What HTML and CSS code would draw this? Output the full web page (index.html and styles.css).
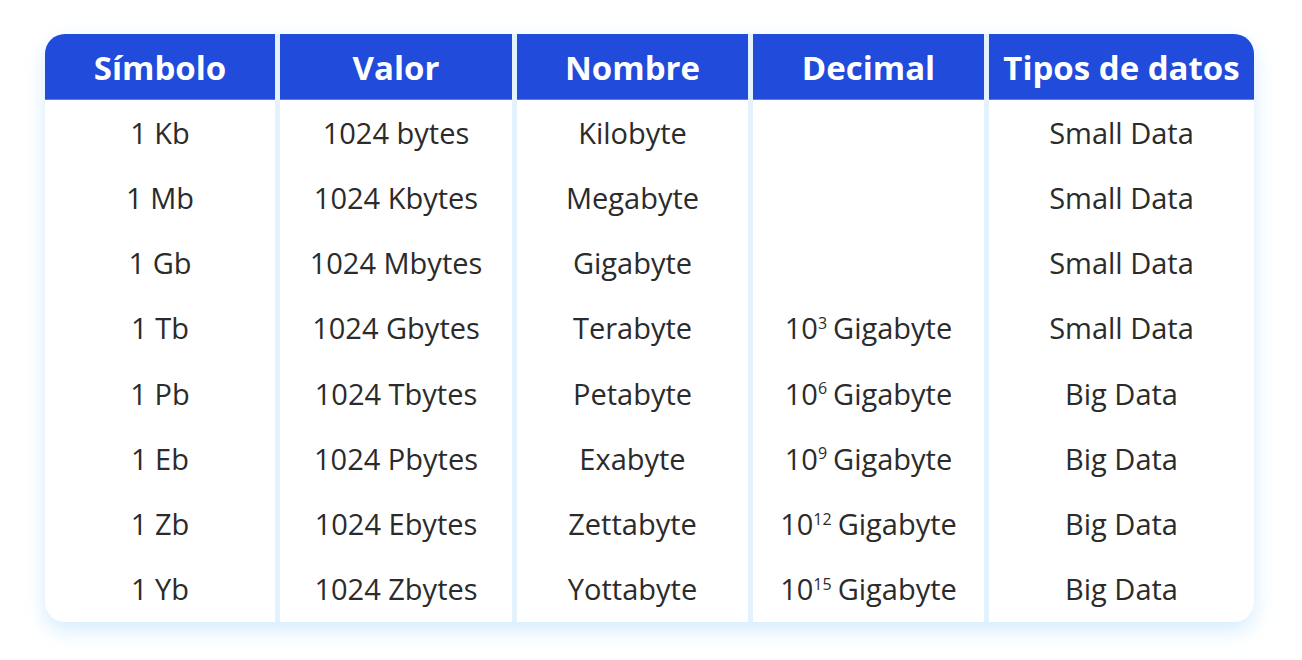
FILE: index.html
```html
<!DOCTYPE html>
<html lang="es">
<head>
<meta charset="utf-8">
<title>Unidades de datos</title>
<link rel="stylesheet" href="styles.css">
</head>
<body>
<div class="page">
  <div class="table">
    <div class="th">Símbolo</div>
    <div class="th">Valor</div>
    <div class="th">Nombre</div>
    <div class="th">Decimal</div>
    <div class="th">Tipos de datos</div>

    <div class="td">1 Kb</div><div class="td">1024 bytes</div><div class="td">Kilobyte</div><div class="td"></div><div class="td">Small Data</div>
    <div class="td">1 Mb</div><div class="td">1024 Kbytes</div><div class="td">Megabyte</div><div class="td"></div><div class="td">Small Data</div>
    <div class="td">1 Gb</div><div class="td">1024 Mbytes</div><div class="td">Gigabyte</div><div class="td"></div><div class="td">Small Data</div>
    <div class="td">1 Tb</div><div class="td">1024 Gbytes</div><div class="td">Terabyte</div><div class="td">10<sup>3</sup> Gigabyte</div><div class="td">Small Data</div>
    <div class="td">1 Pb</div><div class="td">1024 Tbytes</div><div class="td">Petabyte</div><div class="td">10<sup>6</sup> Gigabyte</div><div class="td">Big Data</div>
    <div class="td">1 Eb</div><div class="td">1024 Pbytes</div><div class="td">Exabyte</div><div class="td">10<sup>9</sup> Gigabyte</div><div class="td">Big Data</div>
    <div class="td">1 Zb</div><div class="td">1024 Ebytes</div><div class="td">Zettabyte</div><div class="td">10<sup>12</sup> Gigabyte</div><div class="td">Big Data</div>
    <div class="td">1 Yb</div><div class="td">1024 Zbytes</div><div class="td">Yottabyte</div><div class="td">10<sup>15</sup> Gigabyte</div><div class="td">Big Data</div>
  </div>
</div>
</body>
</html>
```

FILE: styles.css
```css
html, body {
  margin: 0;
  padding: 0;
  background: #ffffff;
}

.page {
  padding: 34px 48px 38px 45px;
  font-family: "Open Sans", "Noto Sans", sans-serif;
}

.table {
  display: grid;
  grid-template-columns: 230px 232px 231px 231px 265px;
  grid-template-rows: 66px;
  grid-auto-rows: 65.25px;
  column-gap: 5px;
  background: #e3f2fd;
  border-radius: 20px;
  overflow: hidden;
  box-shadow: 0 8px 20px rgba(100, 185, 250, 0.28);
}

.th {
  background: #204bdb;
  color: #ffffff;
  font-weight: 700;
  font-size: 33px;
  display: flex;
  align-items: center;
  justify-content: center;
  box-shadow: inset 0 -1px 0 #5b7ee6;
}

.td {
  background: #ffffff;
  color: #2b2b2b;
  font-size: 29px;
  display: flex;
  align-items: center;
  justify-content: center;
  padding-bottom: 1px;
}

.td sup {
  font-size: 16px;
  line-height: 1;
  align-self: flex-start;
  margin-top: 19px;
  margin-right: 6px;
}
```
